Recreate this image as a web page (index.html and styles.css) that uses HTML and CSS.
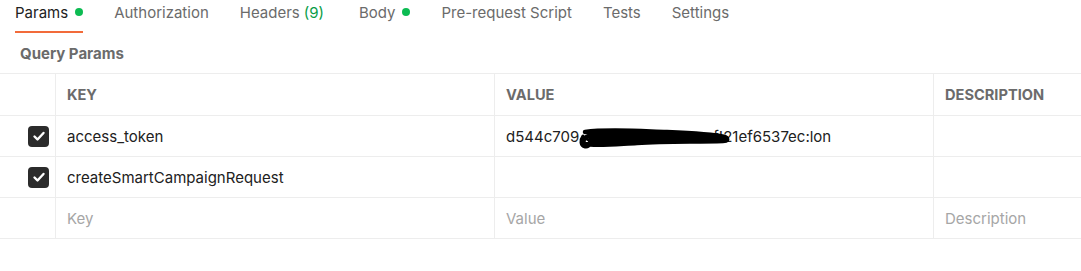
FILE: index.html
```html
<!DOCTYPE html>
<html>
<head>
<meta charset="utf-8">
<link rel="stylesheet" href="styles.css">
</head>
<body>
<nav class="tabs">
  <div class="tab active">Params <span class="dot"></span></div>
  <div class="tab">Authorization</div>
  <div class="tab wide">Headers <span class="count">(9)</span></div>
  <div class="tab">Body <span class="dot"></span></div>
  <div class="tab">Pre-request Script</div>
  <div class="tab">Tests</div>
  <div class="tab">Settings</div>
</nav>
<div class="section-title">Query Params</div>
<div class="table">
  <div class="row head">
    <div class="cell check"></div>
    <div class="cell">KEY</div>
    <div class="cell">VALUE</div>
    <div class="cell">DESCRIPTION</div>
  </div>
  <div class="row">
    <div class="cell check"><span class="box"><svg viewBox="0 0 20 20" width="20" height="20"><path d="M5.5 10.5l3 3 6-6.5" fill="none" stroke="#fff" stroke-width="2.4" stroke-linecap="round" stroke-linejoin="round"/></svg></span></div>
    <div class="cell">access_token</div>
    <div class="cell">d544c709<span class="redact"><svg class="scribble" viewBox="0 0 160 28" width="160" height="28"><path d="M6 12 C3 16 3 22 8 23 C14 24 14 16 10 15 C6 14 4 20 8 21" fill="none" stroke="#000" stroke-width="3" stroke-linecap="round"/><path d="M8 8 C30 5 60 7 90 8 C115 9 135 10 148 13 C152 15 150 17 146 17 C120 18 90 17 60 19 C40 20 20 22 8 20 C4 17 8 12 16 11 C50 9 100 12 150 16" fill="none" stroke="#000" stroke-width="4.5" stroke-linecap="round" stroke-linejoin="round"/><path d="M12 10 L120 10 L150 15 L130 18 L12 21 Z" fill="#000"/></svg></span>f!21ef6537ec:lon</div>
    <div class="cell"></div>
  </div>
  <div class="row">
    <div class="cell check"><span class="box"><svg viewBox="0 0 20 20" width="20" height="20"><path d="M5.5 10.5l3 3 6-6.5" fill="none" stroke="#fff" stroke-width="2.4" stroke-linecap="round" stroke-linejoin="round"/></svg></span></div>
    <div class="cell">createSmartCampaignRequest</div>
    <div class="cell"></div>
    <div class="cell"></div>
  </div>
  <div class="row">
    <div class="cell check"></div>
    <div class="cell ph">Key</div>
    <div class="cell ph">Value</div>
    <div class="cell ph">Description</div>
  </div>
</div>
</body>
</html>
```
FILE: styles.css
```css
* { box-sizing: border-box; }
html, body { margin: 0; padding: 0; background: #fff; }
body {
  font-family: Inter, "Noto Sans", "Liberation Sans", sans-serif;
  font-size: 15px;
  color: #212121;
  width: 1081px;
  height: 271px;
  overflow: hidden;
}
.tabs {
  display: flex;
  padding-left: 15px;
  height: 33px;
}
.tab {
  display: flex;
  align-items: center;
  height: 33px;
  padding-bottom: 7px;
  margin-right: 31px;
  color: #6b6b6b;
  white-space: nowrap;
  border-bottom: 2px solid transparent;
}
.tab.wide { margin-right: 35px; }
.tab.active {
  color: #212121;
  border-bottom-color: #f26b3a;
}
.dot {
  display: inline-block;
  width: 8px;
  height: 8px;
  border-radius: 50%;
  background: #0cbb52;
  margin-left: 7px;
}
.count { color: #0a9c47; margin-left: 4px; }
.section-title {
  font-weight: 700;
  color: #6b6b6b;
  padding-left: 20px;
  height: 40px;
  display: flex;
  align-items: center;
}
.table {
  border-top: 1px solid #ededed;
}
.row {
  display: grid;
  grid-template-columns: 55px 439px 439px 1fr;
  height: 41px;
  border-bottom: 1px solid #ededed;
}
.row.head { height: 42px; }
.cell {
  display: flex;
  align-items: center;
  padding-left: 11px;
  border-left: 1px solid #ededed;
  white-space: nowrap;
}
.cell.check {
  border-left: none;
  padding-left: 28px;
}
.row.head .cell {
  font-weight: 700;
  font-size: 14.6px;
  color: #6b6b6b;
}
.ph { color: #a6a6a6; }
.box {
  width: 21px;
  height: 21px;
  border-radius: 4px;
  background: #2b2b2b;
  display: flex;
  align-items: center;
  justify-content: center;
}
.redact {
  position: relative;
  display: inline-block;
  width: 134px;
  height: 16px;
}
.scribble {
  position: absolute;
  left: -2px;
  top: -4px;
}
```
